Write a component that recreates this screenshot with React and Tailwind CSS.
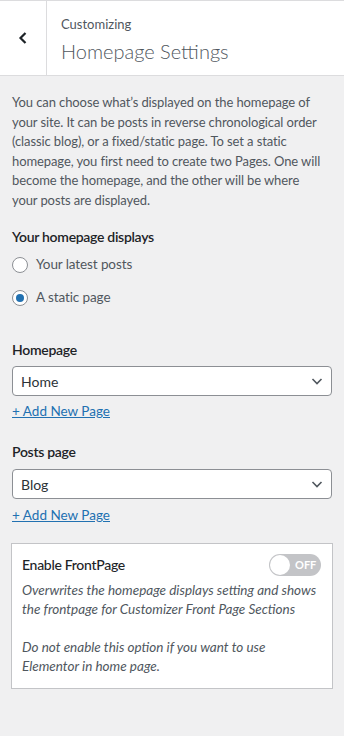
import { useState } from "react";

const font = { fontFamily: 'Lato, "Noto Sans", sans-serif' };

function Radio({ checked, label, onChange }) {
  return (
    <label className="flex items-center gap-[8px] h-[33px] cursor-pointer">
      <span className="w-[16px] h-[16px] rounded-full border border-[#8c8f94] bg-white flex items-center justify-center">
        {checked && <span className="w-[8px] h-[8px] rounded-full bg-[#2271b1]" />}
      </span>
      <span className="text-[13.5px] text-[#50575e] tracking-[-0.1px]" onClick={onChange}>
        {label}
      </span>
    </label>
  );
}

function Select({ value }) {
  return (
    <div className="h-[30px] w-full bg-white border border-[#8c8f94] rounded-[4px] flex items-center justify-between pl-[8px] pr-[6px]">
      <span className="text-[14px] text-[#2c3338]">{value}</span>
      <svg width="16" height="16" viewBox="0 0 16 16" fill="none">
        <path d="M3.5 6l4.5 4.5L12.5 6" stroke="#50575e" strokeWidth="1.6" />
      </svg>
    </div>
  );
}

export default function App() {
  const [tipo, setTipo] = useState("static");
  const [activo, setActivo] = useState(false);

  return (
    <div className="min-h-[736px] bg-[#f0f0f1]" style={font}>
      <div className="h-[76px] bg-white border-t border-b border-[#dcdcde] flex">
        <button className="w-[47px] border-r border-[#dcdcde] flex items-center justify-center" type="button">
          <svg width="14" height="14" viewBox="0 0 14 14" fill="none">
            <path d="M9.5 2L4.5 7l5 5" stroke="#1d2327" strokeWidth="2.2" />
          </svg>
        </button>
        <div className="pl-[14px] pt-[13px]">
          <div className="text-[13px] leading-[20px] text-[#50575e]">Customizing</div>
          <div className="text-[20px] leading-[28px] mt-[3px] font-light text-[#50575e]">Homepage Settings</div>
        </div>
      </div>

      <div className="px-[12px]">
        <p className="pt-[17px] text-[13px] leading-[19.5px] text-[#50575e] tracking-[-0.1px] whitespace-nowrap">
          You can choose what’s displayed on the homepage of<br />
          your site. It can be posts in reverse chronological order<br />
          (classic blog), or a fixed/static page. To set a static<br />
          homepage, you first need to create two Pages. One will<br />
          become the homepage, and the other will be where<br />
          your posts are displayed.
        </p>

        <div className="mt-[17px] text-[14px] leading-[20px] font-semibold text-[#1d2327] tracking-[-0.3px]">Your homepage displays</div>
        <div className="mt-[1px]">
          <Radio checked={tipo === "posts"} label="Your latest posts" onChange={() => setTipo("posts")} />
          <Radio checked={tipo === "static"} label="A static page" onChange={() => setTipo("static")} />
        </div>

        <div className="mt-[26px] text-[14px] leading-[20px] font-semibold text-[#1d2327] tracking-[-0.3px]">Homepage</div>
        <div className="mt-[6px]">
          <Select value="Home" />
        </div>
        <a href="#" className="block mt-[5px] text-[13.5px] leading-[20px] text-[#2271b1] underline w-fit">
          + Add New Page
        </a>

        <div className="mt-[21px] text-[14px] leading-[20px] font-semibold text-[#1d2327] tracking-[-0.3px]">Posts page</div>
        <div className="mt-[7px]">
          <Select value="Blog" />
        </div>
        <a href="#" className="block mt-[6px] text-[13.5px] leading-[20px] text-[#2271b1] underline w-fit">
          + Add New Page
        </a>

        <div className="mt-[18px] -ml-[1px] w-[322px] bg-white border border-[#c3c4c7] px-[10px] pt-[10px] pb-[12px]">
          <div className="flex items-center justify-between">
            <span className="text-[14px] leading-[22px] font-medium text-[#1d2327] tracking-[-0.3px]">Enable FrontPage</span>
            <button
              type="button"
              onClick={() => setActivo(!activo)}
              className="w-[52px] h-[22px] rounded-full bg-[#c3c4c7] flex items-center p-[1px] mr-[1px]"
            >
              <span className="w-[20px] h-[20px] rounded-full bg-white" />
              <span className="text-[11px] font-bold text-white ml-[5px]">OFF</span>
            </button>
          </div>
          <p className="mt-[5px] text-[13.5px] leading-[19px] italic text-[#50575e] whitespace-nowrap">
            Overwrites the homepage displays setting and shows<br />
            the frontpage for Customizer Front Page Sections
          </p>
          <p className="mt-[19px] text-[13.5px] leading-[19px] italic text-[#50575e] whitespace-nowrap">
            Do not enable this option if you want to use<br />
            Elementor in home page.
          </p>
        </div>
      </div>
    </div>
  );
}
